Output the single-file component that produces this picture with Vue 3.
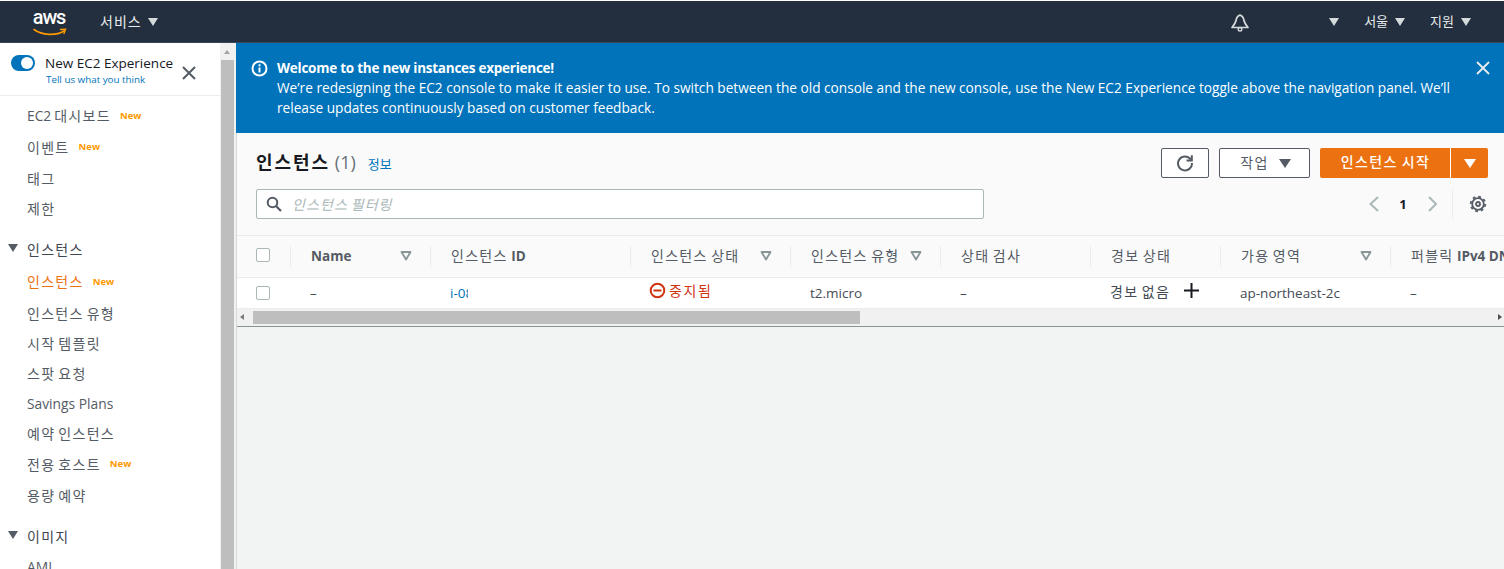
<script setup>
const nav = [
  { prefix: 'EC2', label: ' 대시보드', isNew: true, h: 32 },
  { label: '이벤트', isNew: true, h: 31 },
  { label: '태그', h: 31 },
  { label: '제한', h: 30 },
  { label: '인스턴스', group: true, h: 42 },
  { label: '인스턴스', isNew: true, active: true, h: 32 },
  { label: '인스턴스 유형', h: 31 },
  { label: '시작 템플릿', h: 30 },
  { label: '스팟 요청', h: 30 },
  { prefix: 'Savings Plans', label: '', h: 30 },
  { label: '예약 인스턴스', h: 30 },
  { label: '전용 호스트', isNew: true, h: 31 },
  { label: '용량 예약', h: 31 },
  { label: '이미지', group: true, h: 41 },
  { prefix: 'AMI', label: '', h: 30 },
]
const columns = [
  { key: 'check' },
  { key: 'name', label: '', suffix: 'Name', sort: true },
  { key: 'id', label: '인스턴스 ', suffix: 'ID' },
  { key: 'state', label: '인스턴스 상태', sort: true },
  { key: 'type', label: '인스턴스 유형', sort: true },
  { key: 'check2', label: '상태 검사' },
  { key: 'alarm', label: '경보 상태' },
  { key: 'az', label: '가용 영역', sort: true },
  { key: 'dns', label: '퍼블릭 ', suffix: 'IPv4 DNS' },
]
</script>

<template>
  <div class="page">
    <header class="topbar">
      <div class="logo">
        <span class="logo-text">aws</span>
        <svg class="smile" width="34" height="9" viewBox="0 0 34 9">
          <path d="M1 1.5C9 7.5 23 8 31 3" fill="none" stroke="#ff9900" stroke-width="1.6" stroke-linecap="round" />
          <path d="M27.5 1.5L32.5 1.2L31 5.6" fill="none" stroke="#ff9900" stroke-width="1.4" stroke-linecap="round" />
        </svg>
      </div>
      <span class="top-link services">서비스</span>
      <i class="caret light services-caret"></i>
      <div class="spacer"></div>
      <svg class="bell" width="18" height="18" viewBox="0 0 18 18">
        <path d="M9 1.200C6.500 1.800 5.500 3.800 5 6.500C4.500 9 3 11 1 13.500H17C15 11 13.500 9 13 6.500C12.500 3.800 11.500 1.800 9 1.200Z" fill="none" stroke="#d5dbdb" stroke-width="1.700" stroke-linejoin="round" />
        <circle cx="9" cy="15.300" r="1.800" fill="none" stroke="#d5dbdb" stroke-width="1.400" />
      </svg>
      <i class="caret light acct-caret"></i>
      <span class="top-link region">서울</span>
      <i class="caret light region-caret"></i>
      <span class="top-link support">지원</span>
      <i class="caret light support-caret"></i>
    </header>

    <div class="body">
      <aside class="sidebar">
        <div class="experience">
          <span class="toggle"><span class="knob"></span></span>
          <div class="exp-text">
            <div class="exp-title">New EC2 Experience</div>
            <div class="exp-link">Tell us what you think</div>
          </div>
          <svg class="exp-close" width="14" height="14" viewBox="0 0 14 14">
            <path d="M1 1L13 13M13 1L1 13" stroke="#545b64" stroke-width="2" />
          </svg>
        </div>
        <nav class="nav">
          <div
            v-for="(item, i) in nav"
            :key="i"
            class="nav-item"
            :class="{ group: item.group, active: item.active }"
            :style="{ height: item.h + 'px' }"
          >
            <i v-if="item.group" class="caret dark group-caret"></i>
            <span class="nav-label"><span v-if="item.prefix" class="lat">{{ item.prefix }}</span>{{ item.label }}</span>
            <span v-if="item.isNew" class="new">New</span>
          </div>
        </nav>
      </aside>

      <div class="side-scroll">
        <i class="scroll-up"></i>
        <div class="side-thumb"></div>
      </div>

      <main class="main">
        <section class="banner">
          <svg class="info" width="17" height="17" viewBox="0 0 17 17">
            <circle cx="8.500" cy="8.500" r="7" fill="none" stroke="#fff" stroke-width="2" />
            <rect x="7.500" y="7.500" width="2" height="5" fill="#fff" />
            <rect x="7.500" y="4.300" width="2" height="2" fill="#fff" />
          </svg>
          <div class="banner-text">
            <div class="banner-title">Welcome to the new instances experience!</div>
            <div>We’re redesigning the EC2 console to make it easier to use. To switch between the old console and the new console, use the New EC2 Experience toggle above the navigation panel. We’ll release updates continuously based on customer feedback.</div>
          </div>
          <svg class="banner-close" width="14" height="14" viewBox="0 0 14 14">
            <path d="M1 1L13 13M13 1L1 13" stroke="#eaeded" stroke-width="1.800" />
          </svg>
        </section>

        <section class="panel">
          <div class="panel-left">
            <div class="title-row">
              <h1>인스턴스</h1>
              <span class="count">(1)</span>
              <span class="info-link">정보</span>
            </div>
            <div class="filter">
              <svg width="16" height="16" viewBox="0 0 16 16">
                <circle cx="6.500" cy="6.500" r="4.800" fill="none" stroke="#545b64" stroke-width="2" />
                <path d="M10 10L15 15" stroke="#545b64" stroke-width="2.200" />
              </svg>
              <span>인스턴스 필터링</span>
            </div>
          </div>
          <div class="panel-right">
            <div class="actions">
              <button class="btn refresh">
                <svg width="18" height="18" viewBox="0 0 18 18">
                  <path d="M14.800 5.500A7 7 0 1 0 16 9" fill="none" stroke="#545b64" stroke-width="2" />
                  <path d="M15.800 1.200V6.500H10.500" fill="none" stroke="#545b64" stroke-width="2" />
                </svg>
              </button>
              <button class="btn work"><span>작업</span><i class="caret dark"></i></button>
              <div class="launch">
                <span class="launch-main">인스턴스 시작</span>
                <span class="launch-drop"><i class="caret white"></i></span>
              </div>
            </div>
            <div class="pager">
              <svg width="12" height="18" viewBox="0 0 12 18"><path d="M10 2L2.500 9L10 16" fill="none" stroke="#aab7b8" stroke-width="2" /></svg>
              <span class="page-no">1</span>
              <svg width="12" height="18" viewBox="0 0 12 18"><path d="M3 2L10 9L3 16" fill="none" stroke="#aab7b8" stroke-width="2" /></svg>
              <span class="pager-sep"></span>
              <svg class="gear" width="18" height="18" viewBox="0 0 18 18">
                <circle cx="9" cy="9" r="5.800" fill="none" stroke="#545b64" stroke-width="1.800" />
                <circle cx="9" cy="9" r="7.300" fill="none" stroke="#545b64" stroke-width="1.800" stroke-dasharray="2.800 2.930" />
                <circle cx="9" cy="9" r="2" fill="none" stroke="#545b64" stroke-width="1.800" />
              </svg>
            </div>
          </div>
        </section>

        <section class="table-wrap">
          <div class="table head">
            <div v-for="c in columns" :key="c.key" class="th" :class="{ first: c.key === 'check' }">
              <span v-if="c.key === 'check'" class="checkbox"></span>
              <template v-else>
                <span>{{ c.label }}<b v-if="c.suffix">{{ c.suffix }}</b></span>
                <svg v-if="c.sort" class="sort" width="12" height="10" viewBox="0 0 12 10">
                  <path d="M1.500 1H10.500L6 8.500Z" fill="none" stroke="#879596" stroke-width="1.800" stroke-linejoin="round" />
                </svg>
              </template>
            </div>
          </div>
          <div class="table row">
            <div class="td first"><span class="checkbox"></span></div>
            <div class="td">–</div>
            <div class="td link">i-0<span class="clipped">8</span></div>
            <div class="td stopped">
              <svg width="17" height="17" viewBox="0 0 17 17">
                <circle cx="8.500" cy="8.500" r="6.800" fill="none" stroke="#d13212" stroke-width="2" />
                <rect x="4.500" y="7.500" width="8" height="2" fill="#d13212" />
              </svg>
              <span class="stopped-text">중지됨</span>
            </div>
            <div class="td">t2.micro</div>
            <div class="td">–</div>
            <div class="td alarm">
              <span>경보 없음</span>
              <svg width="15" height="15" viewBox="0 0 15 15"><path d="M7.500 0V15M0 7.500H15" stroke="#16191f" stroke-width="2" /></svg>
            </div>
            <div class="td">ap-northeast-2c</div>
            <div class="td">–</div>
          </div>
          <div class="h-scroll">
            <i class="arrow-left"></i>
            <div class="h-thumb"></div>
            <i class="arrow-right"></i>
          </div>
        </section>
        <div class="rest"></div>
      </main>
    </div>
  </div>
</template>

<style>
html, body { margin: 0; overflow: hidden; background: #fff; }
</style>

<style scoped>
.page {
  width: 1504px;
  height: 569px;
  overflow: hidden;
  display: flex;
  flex-direction: column;
  font-family: "Open Sans", "Noto Sans CJK KR", sans-serif;
  font-size: 13.5px;
  color: #545b64;
}
.topbar {
  margin-top: 1px;
  flex: 0 0 42px;
  box-sizing: border-box;
  background: #232f3e;
  border-bottom: 1px solid #37475a;
  display: flex;
  align-items: center;
  color: #eaeded;
}
.logo { margin-left: 32px; width: 36px; height: 30px; display: flex; flex-direction: column; align-items: center; }
.logo-text { font: 500 20px/20px Roboto, sans-serif; color: #fff; letter-spacing: -1.2px; margin-left: -2px; }
.smile { display: block; margin-top: 1px; }
.top-link { font-size: 13px; color: #eaeded; margin-bottom: 2px; }
.services { margin-left: 32px; font-size: 14px; letter-spacing: 1px; }
.services-caret { margin-left: 6px; }
.spacer { flex: 1; }
.bell { margin-right: 80px; margin-top: 3px; }
.topbar .caret { margin-top: 1px; }
.acct-caret { margin-right: 25px; }
.region-caret { margin-left: 7px; margin-right: 25px; }
.support-caret { margin-left: 7px; margin-right: 33px; }
.caret { display: inline-block; width: 0; height: 0; border-left: 5px solid transparent; border-right: 5px solid transparent; border-top: 8px solid; }
.caret.light { border-top-color: #d5dbdb; }
.caret.dark { border-top-color: #545b64; }
.caret.white { border-top-color: #fff; }

.body { flex: 1; display: flex; min-height: 0; }
.sidebar { width: 220px; flex: none; background: #fff; overflow: hidden; }
.experience { height: 53px; box-sizing: border-box; border-bottom: 1px solid #eaeded; position: relative; display: flex; padding: 12px 0 0 11px; }
.toggle { width: 24px; height: 16px; background: #0073bb; border-radius: 8px; position: relative; flex: none; }
.knob { position: absolute; width: 12px; height: 12px; right: 2px; top: 2px; background: #fff; border-radius: 50%; }
.exp-text { margin-left: 10px; }
.exp-title { font-size: 13.5px; line-height: 17px; color: #16191f; }
.exp-link { font-size: 9.8px; line-height: 13px; color: #0073bb; margin-top: 1px; margin-left: 1px; }
.exp-close { position: absolute; left: 182px; top: 23px; }

.nav { padding-top: 3px; }
.nav-item { display: flex; align-items: center; padding-left: 27px; font-size: 14px; color: #545b64; position: relative; box-sizing: border-box; }
.nav-label { letter-spacing: 1.3px; word-spacing: -2px; }
.lat { letter-spacing: 0; font-size: 13.8px; word-spacing: 0; }
.nav-item.group { padding-top: 10px; color: #414750; }
.nav-item.active { color: #ec7211; }
.group-caret { position: absolute; left: 8px; top: 21px; }
.new { font-size: 9.5px; font-weight: 700; color: #ff9900; margin-left: 9px; }

.side-scroll { width: 16px; flex: none; background: #f1f1f1; position: relative; box-sizing: border-box; padding: 17px 1px 0; }
.scroll-up { position: absolute; left: 4px; top: 7px; width: 0; height: 0; border-left: 3.5px solid transparent; border-right: 3.5px solid transparent; border-bottom: 4px solid #a3a3a3; }
.side-thumb { width: 13px; height: 100%; background: #bebebe; }

.main { flex: 1; min-width: 0; display: flex; flex-direction: column; background: #f2f3f3; }
.banner { height: 90px; flex: none; background: #0073bb; color: #fff; box-sizing: border-box; padding: 15px 14px 0 15px; display: flex; line-height: 20px; }
.info { flex: none; margin-top: 2px; }
.banner-text { margin-left: 9px; width: 1190px; font-size: 13.66px; }
.banner-title { font-weight: 700; font-size: 13.5px; letter-spacing: -0.25px; }
.banner-close { flex: none; margin-left: auto; margin-top: 3px; }

.panel { height: 102px; flex: none; background: #fafafa; display: flex; justify-content: space-between; box-sizing: border-box; border-left: 1px solid #d5dbdb; }
.panel-left { padding: 16px 0 0 19px; }
.title-row { display: flex; align-items: baseline; height: 40px; box-sizing: border-box; }
h1 { margin: 0; font-size: 18px; line-height: 26px; font-weight: 700; color: #16191f; letter-spacing: 1.9px; }
.count { font-size: 18px; color: #687078; margin-left: 5px; }
.info-link { font-size: 13px; color: #0073bb; margin-left: 12px; }
.filter { width: 728px; height: 30px; box-sizing: border-box; background: #fff; border: 1px solid #aab7b8; border-radius: 2px; display: flex; align-items: center; padding-left: 9px; }
.filter span { font-style: italic; color: #aab7b8; font-size: 14px; margin-left: 10px; letter-spacing: 1.1px; word-spacing: -2px; margin-bottom: 1px; }
.panel-right { padding: 15px 16px 0 0; display: flex; flex-direction: column; align-items: flex-end; }
.actions { display: flex; gap: 10px; height: 30px; }
.btn { box-sizing: border-box; height: 30px; background: #fff; border: 1px solid #545b64; border-radius: 2px; display: flex; align-items: center; justify-content: center; font: inherit; color: #545b64; padding: 0; }
.refresh { width: 48px; }
.work { width: 91px; gap: 10px; padding-left: 2px; font-size: 14px; letter-spacing: 1.4px; }
.work span { margin-bottom: 2px; }
.work .caret { border-left-width: 6px; border-right-width: 6px; border-top-width: 9px; }
.launch { display: flex; width: 168px; height: 30px; background: #ec7211; color: #fff; border-radius: 2px; }
.launch-main { width: 131px; box-sizing: border-box; border-right: 1px solid #fff; text-align: center; line-height: 28px; font-size: 14px; font-weight: 500; letter-spacing: 1.4px; word-spacing: -1px; padding-left: 1px; }
.launch-drop { flex: 1; display: flex; align-items: center; justify-content: center; }
.launch-drop .caret { border-left-width: 6px; border-right-width: 6px; border-top-width: 9px; }
.pager { display: flex; align-items: center; height: 30px; margin-top: 11px; }
.page-no { width: 46px; text-align: center; font-weight: 700; font-size: 13px; color: #16191f; }
.pager-sep { width: 1px; height: 30px; background: #eaeded; margin: 0 16px 0 14px; }
.gear { margin-right: 1px; }

.table-wrap { flex: none; overflow: hidden; border-left: 1px solid #d5dbdb; }
.table { display: grid; grid-template-columns: 54px 140px 200px 160px 150px 150px 130px 170px 200px; width: max-content; }
.head { height: 43px; background: #fafafa; border-top: 1px solid #eaeded; border-bottom: 1px solid #eaeded; box-sizing: border-box; }
.th { position: relative; display: flex; align-items: center; padding: 0 0 3px 20px; font-size: 14px; letter-spacing: 1.3px; word-spacing: -1.5px; box-sizing: border-box; }
.th b { font-weight: 700; font-size: 13.5px; letter-spacing: 0; word-spacing: 0; }
.th:not(.first)::before { content: ""; position: absolute; left: -1px; top: 10px; height: 21px; width: 1px; background: #eaeded; }
.sort { position: absolute; right: 19px; top: 15px; }
.th .checkbox, .td .checkbox { display: block; }
.th.first { padding-left: 19px; }
.td.first { padding-left: 19px; padding-bottom: 1px; }
.checkbox { width: 12px; height: 12px; background: #fff; border: 1px solid #aab7b8; border-radius: 2px; box-sizing: content-box; }
.row { height: 31px; background: #fff; border-bottom: 1px solid #eaeded; box-sizing: border-box; }
.td { display: flex; align-items: center; padding-left: 19px; font-size: 13.5px; color: #444b54; box-sizing: border-box; position: relative; overflow: hidden; }
.link { color: #0073bb; }
.clipped { width: 3px; overflow: hidden; }
.stopped { color: #d13212; gap: 3px; font-size: 14px; letter-spacing: 1.6px; padding-bottom: 5px; padding-left: 18px; }
.stopped-text { margin-bottom: 2px; }
.alarm { gap: 14px; padding-bottom: 5px; font-size: 14px; letter-spacing: 1.3px; word-spacing: -1.5px; }
.h-scroll { height: 17px; background: #f1f1f1; position: relative; border-bottom: 1px solid #879596; box-sizing: content-box; }
.h-thumb { position: absolute; left: 16px; top: 2px; width: 607px; height: 13px; background: #bebebe; }
.arrow-left { position: absolute; left: 3px; top: 5px; width: 0; height: 0; border-top: 3.5px solid transparent; border-bottom: 3.5px solid transparent; border-right: 4px solid #7a7a7a; }
.arrow-right { position: absolute; right: 2px; top: 5px; width: 0; height: 0; border-top: 3.5px solid transparent; border-bottom: 3.5px solid transparent; border-left: 4px solid #505050; }
.rest { flex: 1; background: #f2f3f3; border-left: 1px solid #d5dbdb; }
</style>
